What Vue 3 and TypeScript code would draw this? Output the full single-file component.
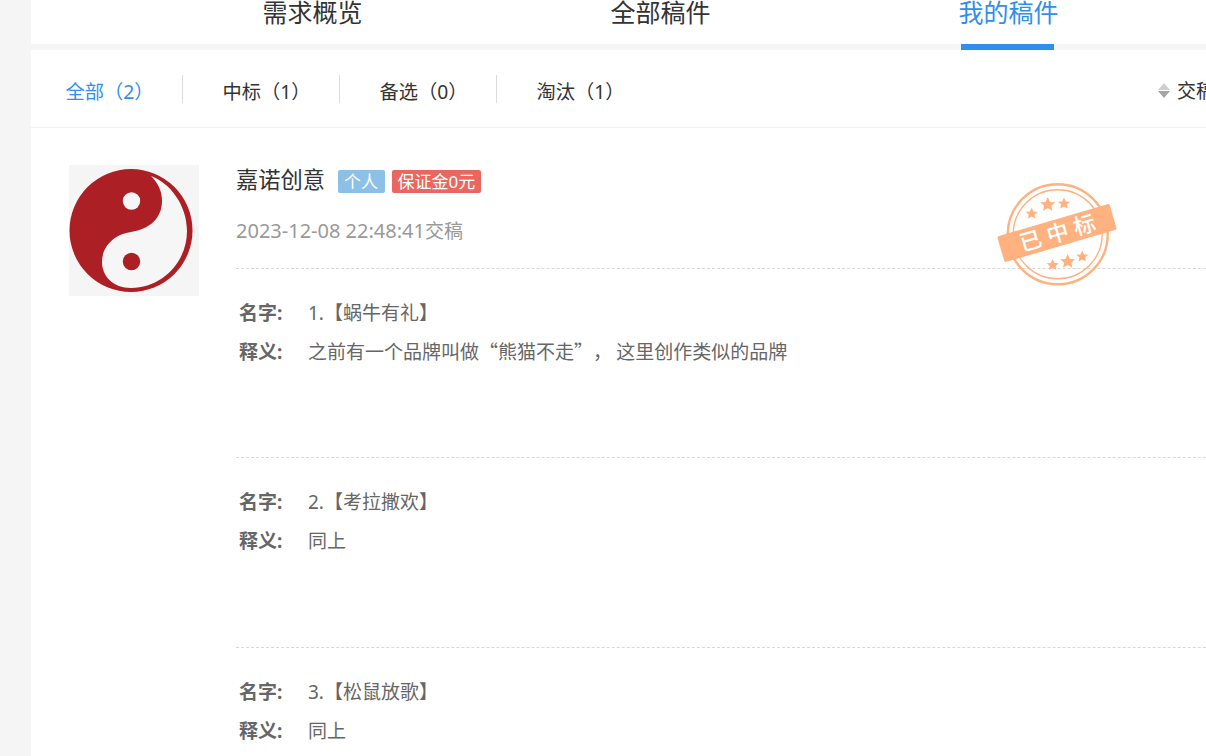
<script setup lang="ts">
interface Entry { index: number; name: string; desc: string }
const entries: Entry[] = [
  { index: 1, name: '蜗牛有礼', desc: '之前有一个品牌叫做“熊猫不走”， 这里创作类似的品牌' },
  { index: 2, name: '考拉撒欢', desc: '同上' },
  { index: 3, name: '松鼠放歌', desc: '同上' },
]
const tabs = ['需求概览', '全部稿件', '我的稿件']
const filters = ['全部（2）', '中标（1）', '备选（0）', '淘汰（1）']
const star = '0,-5 1.5,-1.7 5,-1.5 2.4,0.8 3.1,4.2 0,2.4 -3.1,4.2 -2.4,0.8 -5,-1.5 -1.5,-1.7'
const stars = [
  { x: 1031.7, y: 213.5, s: 1.2 }, { x: 1047.7, y: 204.5, s: 1.5 }, { x: 1064, y: 203.5, s: 1.2 },
  { x: 1052.7, y: 265, s: 1.2 }, { x: 1067.7, y: 261.5, s: 1.5 }, { x: 1082.3, y: 256.5, s: 1.2 },
]
</script>

<template>
  <div class="page">
    <main class="panel">
      <nav class="tabs">
        <span v-for="(t, i) in tabs" :key="t" class="tab" :class="{ active: i === 2 }">{{ t }}</span>
      </nav>

      <div class="filters">
        <span v-for="(f, i) in filters" :key="f" class="filter" :class="{ on: i === 0 }">{{ f }}</span>
        <div class="sort">
          <span class="arrows"><i class="up"></i><i class="down"></i></span>
          <span class="sort-label">交稿时间</span>
        </div>
      </div>

      <section class="work">
        <svg class="avatar" viewBox="69 165 130 131" width="130" height="131">
          <rect x="69" y="165" width="130" height="131" fill="#f5f5f5" />
          <circle cx="131" cy="230.5" r="61.5" fill="#ac1f24" />
          <path d="M151 176C170 183 187 205 187 231C187 262 162 288 131 288C113 288 102 276 102 262C102 245 116 234 131 232C150 229 162 218 162 201C162 191 158 183 151 176Z" fill="#f6f6f6" />
          <circle cx="131.5" cy="201" r="8.7" fill="#f6f6f6" />
          <circle cx="131.5" cy="261.5" r="8.7" fill="#ac1f24" />
        </svg>

        <div class="body">
          <header class="head">
            <div class="who">
              <span class="name">嘉诺创意</span>
              <span class="badge blue">个人</span>
              <span class="badge red">保证金0元</span>
            </div>
            <div class="date"><span class="stamp-time">2023-12-08 22:48:41</span>交稿</div>
          </header>
          <article v-for="e in entries" :key="e.index" class="entry">
            <div class="row"><b>名字:</b><span>{{ e.index }}.【{{ e.name }}】</span></div>
            <div class="row"><b>释义:</b><span class="cjk">{{ e.desc }}</span></div>
          </article>
        </div>
      </section>
    </main>

    <svg class="stamp" viewBox="990 175 135 120" width="135" height="120">
      <circle cx="1057.7" cy="234.3" r="50" fill="none" stroke="#ffb27f" stroke-width="2.4" />
      <circle cx="1057.7" cy="234.3" r="44.5" fill="none" stroke="#ffb27f" stroke-width="1.4" />
      <polygon v-for="(s, i) in stars" :key="i" :points="star" fill="#ffb27f"
        :transform="`translate(${s.x} ${s.y}) scale(${s.s})`" />
      <g transform="rotate(-16.3 1057 233)">
        <rect x="998.5" y="219.5" width="117" height="27" rx="2" fill="#ffb27f" />
        <text x="1060.5" y="241" text-anchor="middle" class="stamp-text">已中标</text>
      </g>
    </svg>
  </div>
</template>

<style>
html, body { margin: 0; background: #f5f5f5; overflow: hidden; }
</style>

<style scoped>
.page {
  position: relative;
  width: 1206px;
  height: 756px;
  overflow: hidden;
  padding-left: 31px;
  box-sizing: border-box;
  font-family: "Noto Sans", "Noto Sans CJK SC", sans-serif;
  color: #333;
  text-spacing-trim: space-all;
}
.panel { width: 1300px; background: #fff; min-height: 756px; }
.tabs {
  display: flex;
  height: 44px;
  padding-left: 107.5px;
  border-bottom: 6px solid #f5f5f5;
}
.tab {
  position: relative;
  width: 348px;
  text-align: center;
  font-size: 25px;
  line-height: 24px;
  color: #333;
}
.tab.active { color: #2f8fec; }
.tab.active::after {
  content: "";
  position: absolute;
  left: 126.5px;
  width: 93px;
  bottom: -6px;
  height: 6px;
  background: #2f8fec;
}
.filters {
  position: relative;
  display: flex;
  align-items: center;
  height: 78px;
  border-bottom: 1px solid #f1f1f1;
  box-sizing: border-box;
  padding-left: 34.5px;
}
.filter {
  position: relative;
  width: 157px;
  height: 28px;
  font-size: 19.25px;
  line-height: 33px;
  color: #333;
}
.filter.on { color: #2f8fec; }
.filter:not(:last-of-type)::after {
  content: "";
  position: absolute;
  right: 39.5px;
  top: 0;
  height: 28px;
  width: 1px;
  background: #dcdcdc;
}
.sort {
  position: absolute;
  left: 1127px;
  top: 25px;
  display: flex;
  align-items: center;
  gap: 7px;
}
.arrows { display: flex; flex-direction: column; gap: 1px; margin-top: 3px; }
.arrows i { display: block; width: 0; height: 0; border-left: 6px solid transparent; border-right: 6px solid transparent; }
.up { border-bottom: 7px solid #cfcfcf; }
.down { border-top: 7px solid #a4a4a4; }
.sort-label { font-size: 19px; line-height: 33px; height: 28px; white-space: nowrap; }
.work { display: flex; padding: 37px 0 0 38px; }
.avatar { display: block; flex: none; }
.body { margin-left: 37px; flex: 1; }
.head { height: 103px; }
.who { display: flex; align-items: center; height: 32px; }
.name { font-size: 22.25px; line-height: 29px; height: 32px; color: #333; margin-right: 12.5px; }
.badge {
  height: 23px;
  line-height: 23px;
  padding: 0 6px;
  border-radius: 2px;
  color: #fff;
  font-size: 17px;
  margin-right: 7px;
}
.blue { background: #8dc0e6; padding: 0 6.5px; }
.red { background: #e9675f; }
.date { margin-top: 19px; font-size: 19px; line-height: 30px; color: #999; }
.stamp-time { font-size: 20px; }
.entry { border-top: 1px dashed #d8d8d8; height: 189px; box-sizing: border-box; padding-top: 29px; }
.entry + .entry { height: 190px; }
.row { display: flex; height: 39px; font-size: 19px; line-height: 30px; color: #666; padding-left: 3px; }
.row b { width: 69px; flex: none; font-weight: 700; color: #666; }
.cjk { font-family: "Noto Sans CJK SC", sans-serif; margin-top: -1px; }
.stamp { position: absolute; left: 990px; top: 175px; }
.stamp-text { font-size: 22px; font-weight: 500; fill: #fff; letter-spacing: 6px; font-family: "Noto Sans CJK SC", sans-serif; }
</style>
